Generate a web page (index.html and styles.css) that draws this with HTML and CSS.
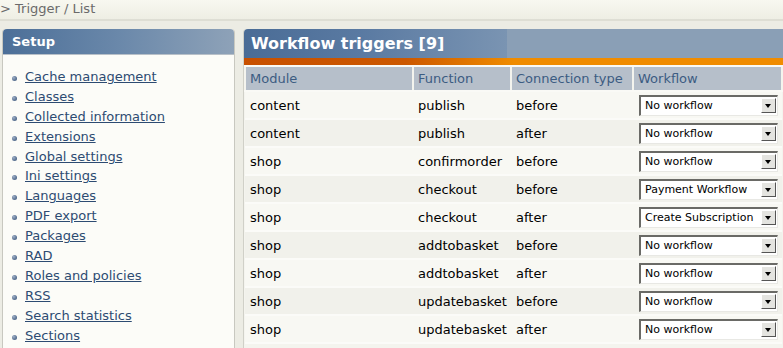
FILE: index.html
```html
<!DOCTYPE html>
<html lang="en">
<head>
    <meta charset="UTF-8">
    <title>Trigger / List</title>
    <link rel="stylesheet" href="styles.css">
</head>
<body>
    <div class="path">&gt; Trigger / List</div>
    <div class="page">
        <div class="left-menu">
            <div class="box-header">Setup</div>
            <ul class="menu">
                <li><a href="#">Cache management</a></li>
                <li><a href="#">Classes</a></li>
                <li><a href="#">Collected information</a></li>
                <li><a href="#">Extensions</a></li>
                <li><a href="#">Global settings</a></li>
                <li><a href="#">Ini settings</a></li>
                <li><a href="#">Languages</a></li>
                <li><a href="#">PDF export</a></li>
                <li><a href="#">Packages</a></li>
                <li><a href="#">RAD</a></li>
                <li><a href="#">Roles and policies</a></li>
                <li><a href="#">RSS</a></li>
                <li><a href="#">Search statistics</a></li>
                <li><a href="#">Sections</a></li>
            </ul>
        </div>
        <div class="content">
            <div class="content-header">
                <h1>Workflow triggers [9]</h1>
                <div class="header-rest"></div>
            </div>
            <div class="orange-bar"></div>
            <table class="list">
                <thead>
                    <tr>
                        <th class="col-module">Module</th>
                        <th class="col-function">Function</th>
                        <th class="col-type">Connection type</th>
                        <th class="col-workflow">Workflow</th>
                    </tr>
                </thead>
                <tbody>
                    <tr><td>content</td><td>publish</td><td>before</td><td><div class="select"><span>No workflow</span><i></i></div></td></tr>
                    <tr><td>content</td><td>publish</td><td>after</td><td><div class="select"><span>No workflow</span><i></i></div></td></tr>
                    <tr><td>shop</td><td>confirmorder</td><td>before</td><td><div class="select"><span>No workflow</span><i></i></div></td></tr>
                    <tr><td>shop</td><td>checkout</td><td>before</td><td><div class="select"><span>Payment Workflow</span><i></i></div></td></tr>
                    <tr><td>shop</td><td>checkout</td><td>after</td><td><div class="select"><span>Create Subscription</span><i></i></div></td></tr>
                    <tr><td>shop</td><td>addtobasket</td><td>before</td><td><div class="select"><span>No workflow</span><i></i></div></td></tr>
                    <tr><td>shop</td><td>addtobasket</td><td>after</td><td><div class="select"><span>No workflow</span><i></i></div></td></tr>
                    <tr><td>shop</td><td>updatebasket</td><td>before</td><td><div class="select"><span>No workflow</span><i></i></div></td></tr>
                    <tr><td>shop</td><td>updatebasket</td><td>after</td><td><div class="select"><span>No workflow</span><i></i></div></td></tr>
                </tbody>
            </table>
        </div>
    </div>
</body>
</html>
```

FILE: styles.css
```css
body {
    margin: 0;
    background: #ecece4;
    font-family: "DejaVu Sans", Verdana, sans-serif;
    font-size: 13px;
    color: #000;
    overflow: hidden;
}
.path {
    height: 19px;
    line-height: 17px;
    color: #6a6a6a;
    font-size: 13px;
    background: linear-gradient(#f8f8f0, #eeeee4);
    border-bottom: 2px solid #deded4;
}
.page {
    display: flex;
    gap: 8px;
    padding: 8px 0 0 2px;
}
.left-menu {
    width: 231px;
    flex: none;
    background: #fcfcf8;
    border: 1px solid #c8c8c0;
    border-top: none;
    border-radius: 4px 4px 0 0;
    height: 330px;
}
.box-header {
    height: 25px;
    line-height: 25px;
    padding-left: 9px;
    color: #fff;
    font-weight: bold;
    font-size: 13px;
    background: linear-gradient(to right, #4c6f98 0%, #6a88aa 50%, #8ea2b8 100%);
    border-radius: 4px 4px 0 0;
    border-bottom: 1px solid #b8c0c8;
}
.menu {
    list-style: none;
    margin: 0;
    padding: 12px 0 0 22px;
}
.menu li {
    position: relative;
    height: 19.9px;
    line-height: 20px;
}
.menu li::before {
    content: "";
    position: absolute;
    left: -13px;
    top: 9px;
    width: 5px;
    height: 5px;
    border-radius: 50%;
    background: radial-gradient(circle at 35% 35%, #9fb0c8, #2e4a70);
}
.menu a {
    color: #2d4b72;
    text-decoration: underline;
}
.content {
    flex: 1;
    background: #f4f4ee;
    border-left: 1px solid #d0d0c8;
    border-radius: 4px 0 0 0;
    height: 330px;
}
.content-header {
    display: flex;
    height: 29px;
}
.content-header h1 {
    margin: 0;
    width: 256px;
    padding-left: 7px;
    line-height: 29px;
    font-size: 16px;
    color: #fff;
    background: linear-gradient(to right, #4a6c96 0%, #5a7aa2 45%, #7a94b2 100%);
    border-radius: 4px 0 0 0;
}
.header-rest {
    flex: 1;
    background: #8a9fb6;
}
.orange-bar {
    height: 7px;
    background: linear-gradient(to right, #c85000 0%, #cc5800 30%, #f08c00 50%, #f08c00 100%);
    border-bottom: 2px solid #fafaf6;
}
.list {
    width: 100%;
    border-collapse: collapse;
}
.list th {
    height: 23px;
    padding: 0 0 0 4px;
    text-align: left;
    font-weight: normal;
    color: #3c5c82;
    background: #b6bfca;
    border-right: 2px solid #f4f4ee;
    border-left: 2px solid #f4f4ee;
    border-bottom: 2px solid #fafaf6;
}
.col-module { width: 162px; }
.col-function { width: 92px; }
.col-type { width: 116px; }
.list td {
    height: 26px;
    padding: 0 0 0 5px;
    vertical-align: middle;
    border-bottom: 2px solid #fbfbf8;
}
.list tbody tr:nth-child(odd) td { background: #f8f8f3; }
.list tbody tr:nth-child(even) td { background: #f1f1eb; }
.select {
    display: flex;
    align-items: center;
    width: 136px;
    height: 18px;
    margin-left: 1px;
    background: #fff;
    border-top: 2px solid #6a6a66;
    border-left: 2px solid #6a6a66;
    border-right: 1px solid #e8e8e4;
    border-bottom: 1px solid #e8e8e4;
    font-size: 11px;
}
.select span {
    flex: 1;
    padding-left: 4px;
    white-space: nowrap;
    overflow: hidden;
}
.select i {
    width: 15px;
    height: 15px;
    margin-right: 1px;
    background: #e4e4e0;
    border-top: 1px solid #fff;
    border-left: 1px solid #fff;
    border-right: 1px solid #555;
    border-bottom: 1px solid #555;
    box-sizing: border-box;
    position: relative;
}
.select i::after {
    content: "";
    position: absolute;
    left: 3px;
    top: 5px;
    border-left: 3px solid transparent;
    border-right: 3px solid transparent;
    border-top: 4px solid #000;
}
```
